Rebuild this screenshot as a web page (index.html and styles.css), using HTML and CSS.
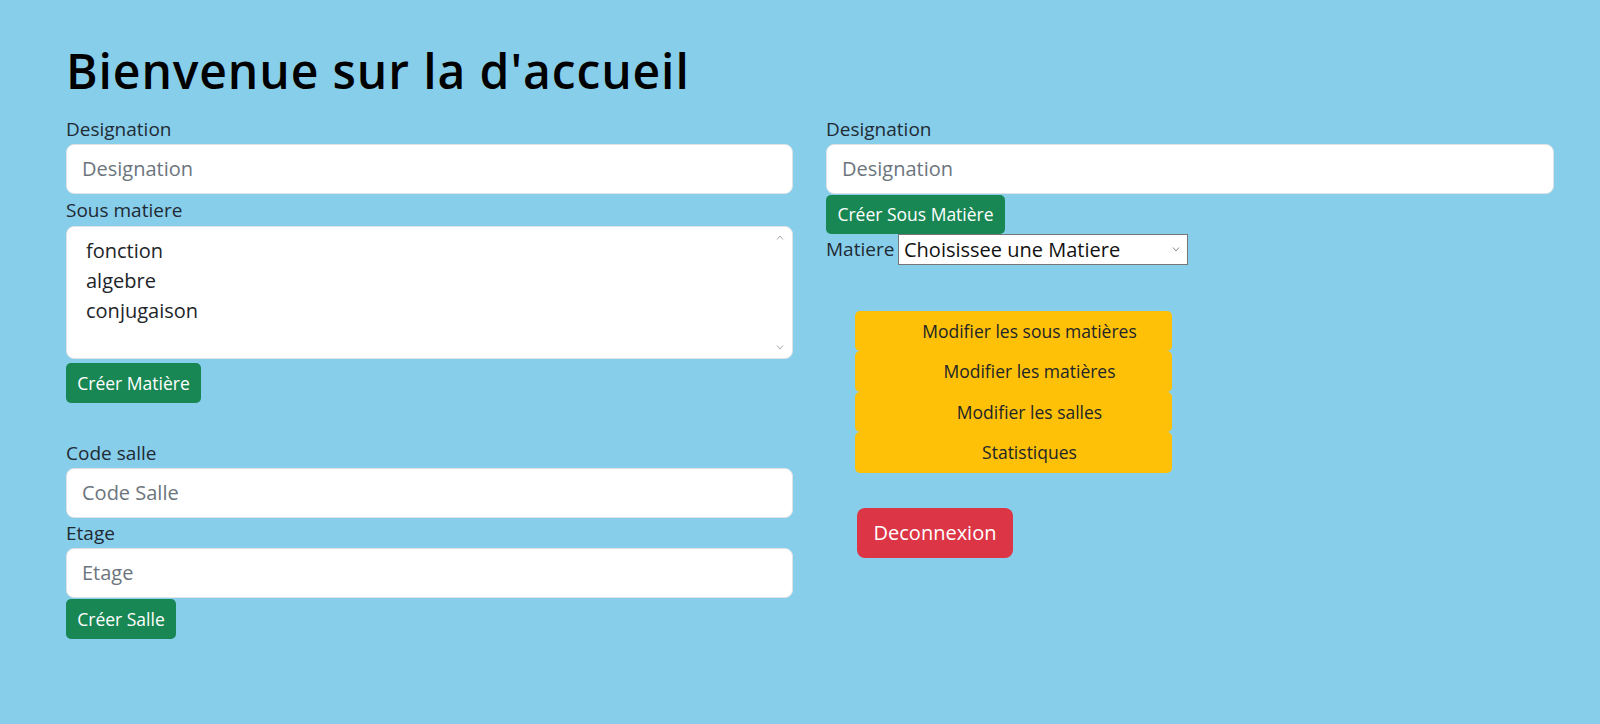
FILE: index.html
```html
<!DOCTYPE html>
<html lang="fr">
<head>
<meta charset="utf-8">
<title>Accueil</title>
<link rel="stylesheet" href="styles.css">
</head>
<body>
<div class="page">
  <h1 class="title">Bienvenue sur la d'accueil</h1>
  <div class="columns">
    <div class="col">
      <label class="lbl">Designation</label>
      <input class="field" type="text" placeholder="Designation">
      <label class="lbl lbl-tall">Sous matiere</label>
      <div class="listbox">
        <div class="opt">fonction</div>
        <div class="opt">algebre</div>
        <div class="opt">conjugaison</div>
        <svg class="arrow arrow-up" width="8" height="5" viewBox="0 0 8 5"><polyline points="1,4.5 4,1 7,4.5" fill="none" stroke="#a9a9a9" stroke-width="1"/></svg>
        <svg class="arrow arrow-down" width="8" height="5" viewBox="0 0 8 5"><polyline points="1,0.5 4,4 7,0.5" fill="none" stroke="#a9a9a9" stroke-width="1"/></svg>
      </div>
      <div class="btn-row"><button class="btn btn-green btn-matiere">Créer Matière</button></div>

      <label class="lbl lbl-gap">Code salle</label>
      <input class="field" type="text" placeholder="Code Salle">
      <label class="lbl">Etage</label>
      <input class="field" type="text" placeholder="Etage">
      <div class="btn-row btn-row-tight"><button class="btn btn-green btn-salle">Créer Salle</button></div>
    </div>

    <div class="col">
      <label class="lbl">Designation</label>
      <input class="field" type="text" placeholder="Designation">
      <div class="btn-row btn-row-tight"><button class="btn btn-green btn-sous">Créer Sous Matière</button></div>
      <div class="select-row">
        <span class="select-lbl">Matiere</span>
        <div class="select-box">
          <span>Choisissee une Matiere</span>
          <svg class="sel-arrow" width="8" height="5" viewBox="0 0 8 5"><polyline points="1,0.5 4,4 7,0.5" fill="none" stroke="#8a8a8a" stroke-width="1"/></svg>
        </div>
      </div>

      <div class="menu">
        <button class="menu-btn">Modifier les sous matières</button>
        <button class="menu-btn">Modifier les matières</button>
        <button class="menu-btn">Modifier les salles</button>
        <button class="menu-btn">Statistiques</button>
      </div>

      <button class="btn-logout">Deconnexion</button>
    </div>
  </div>
</div>
</body>
</html>
```
FILE: styles.css
```css
* { box-sizing: border-box; }

html, body {
  margin: 0;
  background: #87ceeb;
  font-family: "Open Sans", "Noto Sans", sans-serif;
  color: #212529;
  height: 100%;
}

.page {
  padding: 42px 46px 0 66px;
}

.title {
  margin: 0 0 14px 0;
  font-size: 48px;
  font-weight: 600;
  letter-spacing: 0.9px;
  line-height: 57.6px;
  color: #000;
}

.columns {
  display: grid;
  grid-template-columns: 727px 728px;
  column-gap: 33px;
}

.col {
  display: flex;
  flex-direction: column;
  align-items: flex-start;
}

.lbl {
  display: block;
  font-size: 19px;
  line-height: 30px;
  height: 30px;
  color: #1f2a33;
}

.lbl-tall { height: 32px; line-height: 32px; }
.lbl-gap { margin-top: 35px; }

.field {
  display: block;
  width: 100%;
  height: 50px;
  padding: 0 15px;
  font-family: inherit;
  font-size: 20px;
  color: #212529;
  background: #fff;
  border: 1px solid #dfe3e6;
  border-radius: 8px;
  outline: none;
}
.field::placeholder { color: #6c757d; opacity: 1; }

.listbox {
  position: relative;
  width: 100%;
  height: 133px;
  background: #fff;
  border: 1px solid #dfe3e6;
  border-radius: 8px;
  padding: 9px 19px;
  font-size: 20px;
  line-height: 30px;
  color: #212529;
}
.arrow { position: absolute; right: 8px; }
.arrow-up { top: 8px; }
.arrow-down { bottom: 8px; }

.btn-row { margin-top: 4px; }
.btn-row-tight { margin-top: 1px; }

.btn {
  display: inline-flex;
  align-items: center;
  justify-content: center;
  height: 40px;
  padding: 0 10px;
  font-family: inherit;
  font-size: 17.5px;
  border: none;
  border-radius: 5px;
  cursor: pointer;
}
.btn-green { background: #198754; color: #fff; }
.btn-matiere { width: 135px; }
.btn-salle { width: 110px; }
.btn-sous { width: 179px; height: 39px; }

.select-row {
  display: flex;
  align-items: center;
  height: 31px;
}
.select-lbl {
  font-size: 19px;
  color: #1f2a33;
  width: 72px;
}
.select-box {
  position: relative;
  width: 290px;
  height: 31px;
  background: #fff;
  border: 1px solid #767676;
  padding: 0 0 0 5px;
  font-size: 20px;
  line-height: 29px;
  color: #111;
}
.sel-arrow { position: absolute; right: 7px; top: 12px; }

.menu {
  margin: 46px 0 0 29px;
  display: flex;
  flex-direction: column;
  width: 317px;
}
.menu-btn {
  height: 40.5px;
  padding: 0 0 0 32px;
  font-family: inherit;
  font-size: 17.5px;
  color: #212529;
  background: #ffc107;
  border: none;
  border-radius: 5px;
  text-align: center;
  cursor: pointer;
}

.btn-logout {
  margin: 35px 0 0 31px;
  width: 156px;
  height: 50px;
  font-family: inherit;
  font-size: 20px;
  color: #fff;
  background: #dc3545;
  border: none;
  border-radius: 8px;
  cursor: pointer;
}
```
